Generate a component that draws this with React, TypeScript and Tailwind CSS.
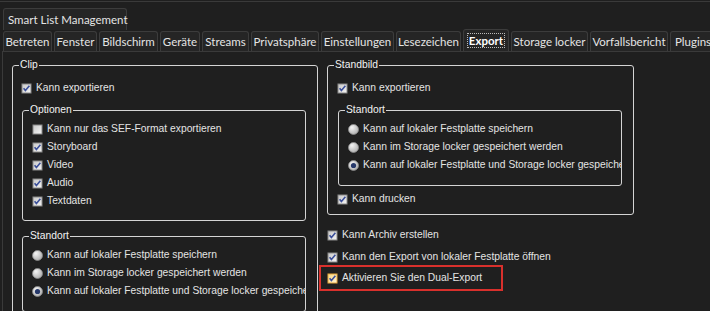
import type { ReactNode } from "react";

const tabs = [
  { label: "Betreten", w: "w-[49px]" },
  { label: "Fenster", w: "w-[43px]" },
  { label: "Bildschirm", w: "w-[59px]" },
  { label: "Geräte", w: "w-[40px]" },
  { label: "Streams", w: "w-[47px]" },
  { label: "Privatsphäre", w: "w-[68px]" },
  { label: "Einstellungen", w: "w-[73px]" },
  { label: "Lesezeichen", w: "w-[65px]" },
  { label: "Export", w: "w-[46px]", active: true },
  { label: "Storage locker", w: "w-[77px]" },
  { label: "Vorfallsbericht", w: "w-[78px]" },
  { label: "Plugins", w: "w-[46px]" },
];

function Check({ checked = true, hot = false }: { checked?: boolean; hot?: boolean }) {
  return (
    <svg width="11" height="11" viewBox="0 0 11 11" className="shrink-0">
      <defs>
        <linearGradient id="cb" x1="0" y1="0" x2="1" y2="1">
          <stop offset="0" stopColor="#c9c9c9" />
          <stop offset="1" stopColor="#f3f3f3" />
        </linearGradient>
        <linearGradient id="cbh" x1="0" y1="0" x2="1" y2="1">
          <stop offset="0" stopColor="#f7d98a" />
          <stop offset="1" stopColor="#fff3d0" />
        </linearGradient>
      </defs>
      <rect x="0.5" y="0.5" width="10" height="10" fill={hot ? "#e9a93c" : "#8a8a8a"} />
      <rect x="1.5" y="1.5" width="8" height="8" fill={hot ? "url(#cbh)" : "url(#cb)"} />
      {checked && (
        <path d="M2.6 5.2 L4.4 7.4 L8.4 2.8" fill="none" stroke="#3b4f9a" strokeWidth="1.6" />
      )}
    </svg>
  );
}

function Radio({ on = false }: { on?: boolean }) {
  return (
    <svg width="11" height="11" viewBox="0 0 11 11" className="shrink-0">
      <defs>
        <radialGradient id="rb" cx="0.35" cy="0.3" r="0.8">
          <stop offset="0" stopColor="#f4f4f4" />
          <stop offset="1" stopColor="#a9a9a9" />
        </radialGradient>
      </defs>
      <circle cx="5.5" cy="5.5" r="5" fill="url(#rb)" stroke="#8c8c8c" strokeWidth="0.8" />
      {on && <circle cx="5.5" cy="5.5" r="2.6" fill="#26386a" />}
    </svg>
  );
}

function Row({ children, icon }: { children: ReactNode; icon: ReactNode }) {
  return (
    <div className="flex h-[18px] items-center gap-[4px] overflow-hidden whitespace-nowrap">
      {icon}
      <span>{children}</span>
    </div>
  );
}

function Group({ title, className, children }: { title: string; className?: string; children: ReactNode }) {
  return (
    <fieldset className={`min-w-0 rounded-[3px] border border-[#d4d4d4] ${className ?? ""}`}>
      <legend className="ml-[6px] px-[1px] leading-[12px] text-[#f2f2f2]">{title}</legend>
      {children}
    </fieldset>
  );
}

export default function App() {
  return (
    <div
      className="h-[311px] w-[710px] overflow-hidden bg-[#1f1f1f] text-[#e4e4e4]"
      style={{ fontFamily: '"Liberation Sans", Arial, sans-serif' }}
    >
      <div className="h-[2px] border-b border-[#3a3a3a]" />

      {/* Obere Registerkarte */}
      <div className="pl-[3px] pt-[6px] font-['Lato',sans-serif] text-[11.5px]">
        <div className="flex h-[22px] w-[124px] items-center whitespace-nowrap rounded-t-[3px] border border-b-0 border-[#3c3c3c] bg-[#252525] pl-[4px]">
          Smart List Management
        </div>
      </div>

      {/* Registerkarten */}
      <div className="mt-[1px] flex h-[20px] items-end gap-[2px] pl-[3px] font-['Lato',sans-serif] text-[11.5px]">
        {tabs.map((t) => (
          <div
            key={t.label}
            className={`flex shrink-0 items-center justify-center whitespace-nowrap rounded-t-[3px] border border-b-0 border-[#3c3c3c] bg-[#252525] ${t.w} ${
              t.active ? "h-[22px] font-bold text-white" : "h-[20px]"
            }`}
          >
            <span className={t.active ? "border border-dotted border-[#bbbbbb] px-[1px] leading-[13px]" : ""}>
              {t.label}
            </span>
          </div>
        ))}
      </div>

      {/* Inhalt */}
      <div className="ml-[2px] flex gap-[9px] border-l border-t border-[#3a3a3a] pl-[9px] pt-[7px] text-[10.3px]">
        <Group title="Clip" className="w-[306px] shrink-0">
          <div className="pb-[10px] pl-[8px] pr-[11px] pt-[8px]">
            <Row icon={<Check />}>Kann exportieren</Row>
            <Group title="Optionen" className="ml-[1px] mt-[7px]">
              <div className="pb-[10px] pl-[9px] pt-[4px]">
                <Row icon={<Check checked={false} />}>Kann nur das SEF-Format exportieren</Row>
                <Row icon={<Check />}>Storyboard</Row>
                <Row icon={<Check />}>Video</Row>
                <Row icon={<Check />}>Audio</Row>
                <Row icon={<Check />}>Textdaten</Row>
              </div>
            </Group>
            <Group title="Standort" className="ml-[1px] mt-[9px]">
              <div className="pb-[11px] pl-[9px] pt-[4px]">
                <Row icon={<Radio />}>Kann auf lokaler Festplatte speichern</Row>
                <Row icon={<Radio />}>Kann im Storage locker gespeichert werden</Row>
                <Row icon={<Radio on />}>Kann auf lokaler Festplatte und Storage locker gespeichert werden</Row>
              </div>
            </Group>
          </div>
        </Group>

        <div className="w-[307px] shrink-0">
          <Group title="Standbild">
            <div className="pb-[6px] pl-[9px] pr-[11px] pt-[8px]">
              <Row icon={<Check />}>Kann exportieren</Row>
              <Group title="Standort" className="ml-[1px] mt-[7px]">
                <div className="pb-[11px] pl-[9px] pt-[4px]">
                  <Row icon={<Radio />}>Kann auf lokaler Festplatte speichern</Row>
                  <Row icon={<Radio />}>Kann im Storage locker gespeichert werden</Row>
                  <Row icon={<Radio on />}>Kann auf lokaler Festplatte und Storage locker gespeichert werden</Row>
                </div>
              </Group>
              <div className="mt-[4px]">
                <Row icon={<Check />}>Kann drucken</Row>
              </div>
            </div>
          </Group>
          <div className="mt-[11px]">
            <Row icon={<Check />}>Kann Archiv erstellen</Row>
          </div>
          <div className="mt-[4px]">
            <Row icon={<Check />}>Kann den Export von lokaler Festplatte öffnen</Row>
          </div>
          <div className="-ml-[8px] -mt-[1px] w-[184px] border-2 border-[#d9302c] py-[2px] pl-[6px]">
            <Row icon={<Check hot />}>Aktivieren Sie den Dual-Export</Row>
          </div>
        </div>
      </div>
    </div>
  );
}
